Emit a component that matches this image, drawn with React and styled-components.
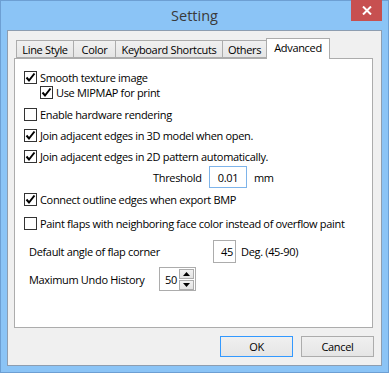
import React from "react"
import styled, { createGlobalStyle } from "styled-components"

const GlobalStyle = createGlobalStyle`
  html, body {
    margin: 0;
    padding: 0;
    background: #ffffff;
  }
  body {
    font-family: "Open Sans", "Noto Sans", sans-serif;
    font-size: 11px;
    letter-spacing: -0.33px;
    color: #000;
  }
`

const tabs = [
  { label: "Line Style", width: 58 },
  { label: "Color", width: 43 },
  { label: "Keyboard Shortcuts", width: 108 },
  { label: "Others", width: 45 },
  { label: "Advanced", width: 64, active: true },
]

const CheckIcon = () => (
  <svg width="11" height="11" viewBox="0 0 11 11">
    <path d="M1.5 5.5 L4 8.5 L9.5 1.5" fill="none" stroke="#000" strokeWidth="2" />
  </svg>
)

const CheckBox = ({ checked }) => (
  <Box>{checked && <CheckIcon />}</Box>
)

const Arrow = ({ up }) => (
  <svg width="7" height="4" viewBox="0 0 7 4">
    <path d={up ? "M0 4 L3.5 0 L7 4 Z" : "M0 0 L7 0 L3.5 4 Z"} fill="#000" />
  </svg>
)

const App = () => (
  <>
    <GlobalStyle />
    <Window>
      <TitleBar>
        <span />
        <Title>Setting</Title>
        <CloseButton>
          <svg width="10" height="9" viewBox="0 0 10 9">
            <path d="M1 0.5 L9 8.5 M9 0.5 L1 8.5" stroke="#fff" strokeWidth="2" />
          </svg>
        </CloseButton>
      </TitleBar>
      <Client>
        <TabRow>
          {tabs.map((t) => (
            <Tab key={t.label} $active={t.active} $width={t.width}>
              {t.label}
            </Tab>
          ))}
        </TabRow>
        <Panel>
          <Row $mt={12} $indent={9}>
            <CheckBox checked />
            <Label>Smooth texture image</Label>
          </Row>
          <Row $mt={2} $indent={25}>
            <CheckBox checked />
            <Label>Use MIPMAP for print</Label>
          </Row>
          <Row $mt={9} $indent={9}>
            <CheckBox />
            <Label>Enable hardware rendering</Label>
          </Row>
          <Row $mt={8} $indent={9}>
            <CheckBox checked />
            <Label>Join adjacent edges in 3D model when open.</Label>
          </Row>
          <Row $mt={8} $indent={9}>
            <CheckBox checked />
            <Label>Join adjacent edges in 2D pattern automatically.</Label>
          </Row>
          <Row $mt={3} $indent={138} $h={22}>
            <FieldLabel $width={56}>Threshold</FieldLabel>
            <Field $width={38} $focused $align="center">0.01</Field>
            <Unit $ml={7}>mm</Unit>
          </Row>
          <Row $mt={5} $indent={9}>
            <CheckBox checked />
            <Label>Connect outline edges when export BMP</Label>
          </Row>
          <Row $mt={11} $indent={9}>
            <CheckBox />
            <Label>Paint flaps with neighboring face color instead of overflow paint</Label>
          </Row>
          <Row $mt={10} $indent={14} $h={23}>
            <FieldLabel $width={184}>Default angle of flap corner</FieldLabel>
            <Field $width={23} $align="right">45</Field>
            <Unit $ml={5}>Deg. (45-90)</Unit>
          </Row>
          <Row $mt={4} $indent={14} $h={24}>
            <FieldLabel $width={130}>Maximum Undo History</FieldLabel>
            <Spinner>
              <SpinValue>50</SpinValue>
              <SpinButtons>
                <SpinButton><Arrow up /></SpinButton>
                <SpinButton><Arrow /></SpinButton>
              </SpinButtons>
            </Spinner>
          </Row>
        </Panel>
        <ButtonBar>
          <Button $default>OK</Button>
          <Button>Cancel</Button>
        </ButtonBar>
      </Client>
    </Window>
  </>
)

const Window = styled.div`
  box-sizing: border-box;
  width: 389px;
  height: 373px;
  background: #8bc4f6;
  border: 1px solid #6d9fd3;
  padding: 0 6px 6px 6px;
  display: flex;
  flex-direction: column;
`

const TitleBar = styled.div`
  height: 29px;
  display: grid;
  grid-template-columns: 1fr auto 1fr;
  align-items: start;
`

const Title = styled.div`
  font-family: "Open Sans", "Noto Sans", sans-serif;
  font-size: 14.5px;
  letter-spacing: 0;
  color: #3a3a3a;
  line-height: 18px;
  margin-top: 6px;
`

const CloseButton = styled.div`
  justify-self: end;
  width: 31px;
  height: 21px;
  margin-top: -1px;
  background: #c75050;
  display: flex;
  align-items: center;
  justify-content: center;
`

const Client = styled.div`
  flex: 1;
  background: #f0f0f0;
  border: 1px solid #8d9db0;
  padding: 7px 8px 8px 6px;
  display: flex;
  flex-direction: column;
`

const TabRow = styled.div`
  display: flex;
  align-items: flex-end;
  height: 20px;
  padding-left: 2px;
  position: relative;
  z-index: 1;
`

const Tab = styled.div`
  box-sizing: border-box;
  width: ${(p) => p.$width}px;
  height: ${(p) => (p.$active ? 21 : 18)}px;
  margin-left: -1px;
  margin-bottom: ${(p) => (p.$active ? -1 : 0)}px;
  border: 1px solid #acacac;
  border-bottom: ${(p) => (p.$active ? "none" : "1px solid #acacac")};
  background: ${(p) => (p.$active ? "#ffffff" : "linear-gradient(#f0f0f0, #e5e5e5)")};
  display: flex;
  align-items: center;
  justify-content: center;
  padding-bottom: ${(p) => (p.$active ? 3 : 0)}px;
  white-space: nowrap;
  &:first-child {
    margin-left: 0;
  }
`

const Panel = styled.div`
  box-sizing: border-box;
  height: 270px;
  background: #ffffff;
  border: 1px solid #acacac;
  display: flex;
  flex-direction: column;
`

const Row = styled.div`
  display: flex;
  align-items: center;
  height: ${(p) => p.$h || 13}px;
  margin-top: ${(p) => p.$mt}px;
  padding-left: ${(p) => p.$indent}px;
  white-space: nowrap;
`

const Box = styled.div`
  box-sizing: border-box;
  width: 13px;
  height: 13px;
  flex: none;
  border: 1px solid #333333;
  background: #ffffff;
  display: flex;
  align-items: center;
  justify-content: center;
`

const Label = styled.span`
  margin-left: 3px;
`

const FieldLabel = styled.span`
  width: ${(p) => p.$width}px;
  flex: none;
`

const Field = styled.div`
  box-sizing: border-box;
  width: ${(p) => p.$width}px;
  height: 100%;
  border: 1px solid ${(p) => (p.$focused ? "#7eb4ea" : "#acacac")};
  background: #fff;
  display: flex;
  align-items: center;
  justify-content: ${(p) => (p.$align === "right" ? "flex-end" : "center")};
  padding: 0 2px;
`

const Unit = styled.span`
  margin-left: ${(p) => p.$ml}px;
`

const Spinner = styled.div`
  box-sizing: border-box;
  width: 37px;
  height: 24px;
  border: 1px solid #acacac;
  background: #fff;
  display: flex;
  align-items: center;
  padding: 0 1px 0 5px;
`

const SpinValue = styled.span`
  flex: 1;
`

const SpinButtons = styled.div`
  display: flex;
  flex-direction: column;
  gap: 1px;
`

const SpinButton = styled.div`
  box-sizing: border-box;
  width: 15px;
  height: 10px;
  border: 1px solid #acacac;
  background: linear-gradient(#f2f2f2, #e3e3e3);
  display: flex;
  align-items: center;
  justify-content: center;
`

const ButtonBar = styled.div`
  display: flex;
  justify-content: flex-end;
  gap: 8px;
  margin-top: 8px;
  margin-right: -1px;
`

const Button = styled.div`
  box-sizing: border-box;
  width: 73px;
  height: 21px;
  border: 1px solid ${(p) => (p.$default ? "#3399ff" : "#acacac")};
  background: linear-gradient(#f0f0f0, #e5e5e5);
  display: flex;
  align-items: center;
  justify-content: center;
`

export default App
